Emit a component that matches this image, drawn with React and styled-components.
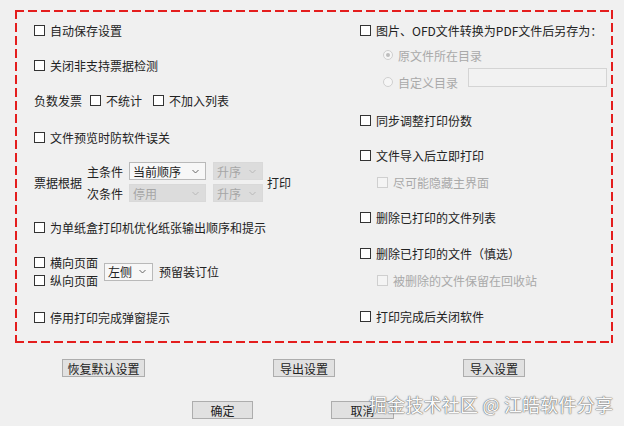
import styled, { createGlobalStyle } from "styled-components";

const Global = createGlobalStyle`
    html, body {
        margin: 0;
        padding: 0;
        background: #f0f0f0;
    }
    body {
        font: 12px "Noto Sans CJK SC", "Microsoft YaHei", sans-serif;
        color: #222;
    }
`

const RED = "#e41d1d"

const Page = styled.div`
    position: relative;
    width: 624px;
    height: 426px;
    overflow: hidden;
    background: #f0f0f0;
`

const Panel = styled.div`
    margin: 10px 0 0 15px;
    width: 598px;
    height: 333px;
    box-sizing: border-box;
    padding: 11px 0 0 19px;
    display: grid;
    grid-template-columns: 326px 1fr;
    background:
        repeating-linear-gradient(90deg, ${RED} 0 9px, transparent 9px 13px) top left / 100% 2px no-repeat,
        repeating-linear-gradient(90deg, ${RED} 0 9px, transparent 9px 13px) bottom left / 100% 2px no-repeat,
        repeating-linear-gradient(180deg, ${RED} 0 9px, transparent 9px 13px) top left / 2px 100% no-repeat,
        repeating-linear-gradient(180deg, ${RED} 0 9px, transparent 9px 13px) top right / 2px 100% no-repeat;
`

const Column = styled.div`
    display: flex;
    flex-direction: column;
`

const Row = styled.div`
    display: flex;
    align-items: center;
    height: ${p => p.$h || 18}px;
    margin-top: ${p => p.$gap || 0}px;
    padding-left: ${p => p.$indent || 0}px;
    white-space: nowrap;
`

const Stack = styled.div`
    display: flex;
    flex-direction: column;
    justify-content: space-between;
    height: 100%;
`

const Box = styled.span`
    display: inline-block;
    box-sizing: border-box;
    width: 11px;
    height: 11px;
    border: 1px solid ${p => p.$disabled ? "#cfcfcf" : "#333"};
    background: ${p => p.$disabled ? "#f4f4f4" : "#fff"};
    margin-right: 5px;
    flex: none;
`

const Dot = styled.span`
    position: relative;
    display: inline-block;
    box-sizing: border-box;
    width: 10px;
    height: 10px;
    border-radius: 50%;
    border: 1px solid #cfcfcf;
    background: #f6f6f6;
    margin-right: 5px;
    flex: none;
    &::after {
        content: "";
        display: ${p => p.$on ? "block" : "none"};
        position: absolute;
        left: 2px;
        top: 2px;
        width: 4px;
        height: 4px;
        border-radius: 50%;
        background: #bdbdbd;
    }
`

const Text = styled.span`
    color: ${p => p.$disabled ? "#a9a9a9" : "#222"};
    margin-left: ${p => p.$ml || 0}px;
    margin-right: ${p => p.$mr || 0}px;
`

const Field = styled.span`
    display: inline-flex;
    align-items: center;
    justify-content: space-between;
    box-sizing: border-box;
    width: ${p => p.$w}px;
    height: 18px;
    padding: 0 6px 0 3px;
    margin-left: ${p => p.$ml || 0}px;
    border: 1px solid ${p => p.$disabled ? "#d9d9d9" : "#b9b9b9"};
    background: ${p => p.$disabled ? "#dcdcdc" : "#f7f7f7"};
    color: ${p => p.$disabled ? "#a6a6a6" : "#222"};
    svg {
        width: 7px;
        height: 5px;
        stroke: ${p => p.$disabled ? "#b8b8b8" : "#666"};
    }
`

const TextInput = styled.span`
    display: inline-block;
    box-sizing: border-box;
    width: 139px;
    height: 19px;
    margin: -9px 0 0 10px;
    border: 1px solid #d4d4d4;
    background: #f2f2f2;
`

const Grid = styled.div`
    display: flex;
    align-items: center;
    height: 40px;
    margin-top: 16px;
`

const Footer = styled.div`
    display: flex;
    flex-direction: column;
    margin-top: 16px;
`

const Buttons = styled.div`
    display: flex;
    gap: ${p => p.$gap}px;
    padding-left: ${p => p.$left}px;
    margin-top: ${p => p.$top || 0}px;
`

const Button = styled.span`
    display: inline-flex;
    align-items: center;
    justify-content: center;
    box-sizing: border-box;
    width: ${p => p.$w}px;
    height: 18px;
    border: 1px solid #adadad;
    background: #e1e1e1;
    color: #222;
`

const Watermark = styled.div`
    position: absolute;
    left: 369px;
    top: 391px;
    font-size: 18px;
    letter-spacing: 0.2px;
    white-space: nowrap;
    color: #fbfbfb;
    text-shadow: 0 0 1px #6a6a6a, 0 0 1px #6a6a6a, 0 0 2px rgba(0,0,0,.35);
`

const Chevron = () => (
    <svg viewBox="0 0 7 5" fill="none" strokeWidth="1">
        <polyline points="0.5,1 3.5,4 6.5,1" />
    </svg>
)

const Check = ({ children, disabled, gap, indent }) => (
    <Row $gap={gap} $indent={indent}>
        <Box $disabled={disabled} />
        <Text $disabled={disabled}>{children}</Text>
    </Row>
)

const Select = ({ w, value, disabled, ml }) => (
    <Field $w={w} $disabled={disabled} $ml={ml}>
        <span>{value}</span>
        <Chevron />
    </Field>
)

export default function App() {
    return <Page>
        <Global />
        <Panel>
            <Column>
                <Check>自动保存设置</Check>
                <Check gap={17}>关闭非支持票据检测</Check>
                <Row $gap={17}>
                    <Text $mr={8}>负数发票</Text>
                    <Box />
                    <Text $mr={11}>不统计</Text>
                    <Box />
                    <Text>不加入列表</Text>
                </Row>
                <Check gap={19}>文件预览时防软件误关</Check>
                <Grid>
                    <Text $mr={5}>票据根据</Text>
                    <Stack>
                        <Row $h={18}>
                            <Text $mr={6}>主条件</Text>
                            <Select w={77} value="当前顺序" />
                            <Select w={50} value="升序" disabled ml={7} />
                        </Row>
                        <Row $h={18}>
                            <Text $mr={6}>次条件</Text>
                            <Select w={77} value="停用" disabled />
                            <Select w={50} value="升序" disabled ml={7} />
                        </Row>
                    </Stack>
                    <Text $ml={4}>打印</Text>
                </Grid>
                <Check gap={16}>为单纸盒打印机优化纸张输出顺序和提示</Check>
                <Row $h={35} $gap={18}>
                    <Stack>
                        <Row $h={17}><Box /><Text>横向页面</Text></Row>
                        <Row $h={17}><Box /><Text>纵向页面</Text></Row>
                    </Stack>
                    <Select w={49} value="左侧" ml={6} />
                    <Text $ml={6}>预留装订位</Text>
                </Row>
                <Check gap={19}>停用打印完成弹窗提示</Check>
            </Column>
            <Column>
                <Check>图片、OFD文件转换为PDF文件后另存为：</Check>
                <Row $gap={7} $indent={23}>
                    <Dot $on />
                    <Text $disabled>原文件所在目录</Text>
                </Row>
                <Row $gap={9} $indent={23}>
                    <Dot />
                    <Text $disabled>自定义目录</Text>
                    <TextInput />
                </Row>
                <Check gap={20}>同步调整打印份数</Check>
                <Check gap={17}>文件导入后立即打印</Check>
                <Check gap={9} indent={17} disabled>尽可能隐藏主界面</Check>
                <Check gap={17}>删除已打印的文件列表</Check>
                <Check gap={18}>删除已打印的文件（慎选）</Check>
                <Check gap={9} indent={17} disabled>被删除的文件保留在回收站</Check>
                <Check gap={18}>打印完成后关闭软件</Check>
            </Column>
        </Panel>
        <Footer>
            <Buttons $left={62} $gap={128}>
                <Button $w={83}>恢复默认设置</Button>
                <Button $w={62}>导出设置</Button>
                <Button $w={62}>导入设置</Button>
            </Buttons>
            <Buttons $left={192} $gap={78} $top={24}>
                <Button $w={61}>确定</Button>
                <Button $w={63}>取消</Button>
            </Buttons>
        </Footer>
        <Watermark>掘金技术社区 @ 江皓软件分享</Watermark>
    </Page>
}
